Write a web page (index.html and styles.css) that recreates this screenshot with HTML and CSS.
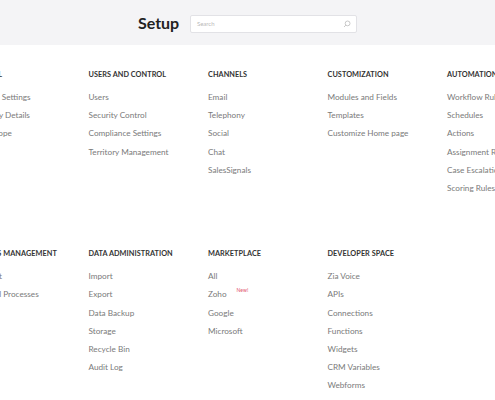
FILE: index.html
```html
<!DOCTYPE html>
<html>
<head>
<meta charset="utf-8">
<link rel="stylesheet" href="styles.css">
</head>
<body>
<header class="topbar">
  <h1 class="title">Setup</h1>
  <div class="search">
    <span class="placeholder">Search</span>
    <svg class="search-icon" width="8" height="8" viewBox="0 0 8 8"><circle cx="4.6" cy="3.4" r="2.4" fill="none" stroke="#bbb" stroke-width="0.8"/><line x1="2.9" y1="5.1" x2="1" y2="7" stroke="#bbb" stroke-width="0.8"/></svg>
  </div>
</header>
<main class="grid">
  <section class="group">
    <h2>GENERAL</h2>
    <ul><li>Personal Settings</li><li>Company Details</li><li>Team Scope</li></ul>
  </section>
  <section class="group">
    <h2>USERS AND CONTROL</h2>
    <ul><li>Users</li><li>Security Control</li><li>Compliance Settings</li><li>Territory Management</li></ul>
  </section>
  <section class="group">
    <h2>CHANNELS</h2>
    <ul><li>Email</li><li>Telephony</li><li>Social</li><li>Chat</li><li>SalesSignals</li></ul>
  </section>
  <section class="group">
    <h2>CUSTOMIZATION</h2>
    <ul><li>Modules and Fields</li><li>Templates</li><li>Customize Home page</li></ul>
  </section>
  <section class="group">
    <h2>AUTOMATION</h2>
    <ul><li>Workflow Rules</li><li>Schedules</li><li>Actions</li><li>Assignment Rules</li><li>Case Escalation Rules</li><li>Scoring Rules</li></ul>
  </section>

  <section class="group">
    <h2>PROCESS MANAGEMENT</h2>
    <ul><li>Blueprint</li><li>Approval Processes</li></ul>
  </section>
  <section class="group">
    <h2>DATA ADMINISTRATION</h2>
    <ul><li>Import</li><li>Export</li><li>Data Backup</li><li>Storage</li><li>Recycle Bin</li><li>Audit Log</li></ul>
  </section>
  <section class="group">
    <h2>MARKETPLACE</h2>
    <ul><li>All</li><li>Zoho<sup class="new">New!</sup></li><li>Google</li><li>Microsoft</li></ul>
  </section>
  <section class="group">
    <h2>DEVELOPER SPACE</h2>
    <ul><li>Zia Voice</li><li>APIs</li><li>Connections</li><li>Functions</li><li>Widgets</li><li>CRM Variables</li><li>Webforms</li></ul>
  </section>
</main>
</body>
</html>
```

FILE: styles.css
```css
html, body {
  margin: 0;
  padding: 0;
  background: #ffffff;
  overflow: hidden;
  font-family: Lato, "Open Sans", sans-serif;
}

.topbar {
  height: 45px;
  background: #f4f4f6;
  display: flex;
  align-items: center;
  justify-content: center;
  gap: 11px;
}

.title {
  margin: 0;
  font-size: 16px;
  font-weight: 700;
  color: #222;
  letter-spacing: -0.1px;
}

.search {
  width: 167px;
  height: 18px;
  margin-top: 2px;
  box-sizing: border-box;
  background: #fff;
  border: 1px solid #e2e2e6;
  border-radius: 2px;
  display: flex;
  align-items: center;
  justify-content: space-between;
  padding: 0 5px 0 6px;
}

.placeholder {
  font-size: 6px;
  color: #b8b8b8;
}

.search-icon {
  display: block;
}

.grid {
  display: grid;
  grid-template-columns: repeat(5, 119.5px);
  row-gap: 51px;
  margin-left: -31px;
  padding-top: 24px;
  width: 600px;
}

.group h2 {
  margin: 0;
  font-size: 7.3px;
  line-height: 12px;
  font-weight: 700;
  color: #333;
  letter-spacing: 0.05px;
  white-space: nowrap;
}

.group ul {
  list-style: none;
  margin: 7px 0 0;
  padding: 0;
}

.group li {
  font-size: 8.2px;
  line-height: 18.2px;
  color: #7a7a7a;
  white-space: nowrap;
}

.new {
  font-size: 5px;
  color: #e0506a;
  vertical-align: 5px;
  line-height: 0;
  margin-left: 10px;
}
```
